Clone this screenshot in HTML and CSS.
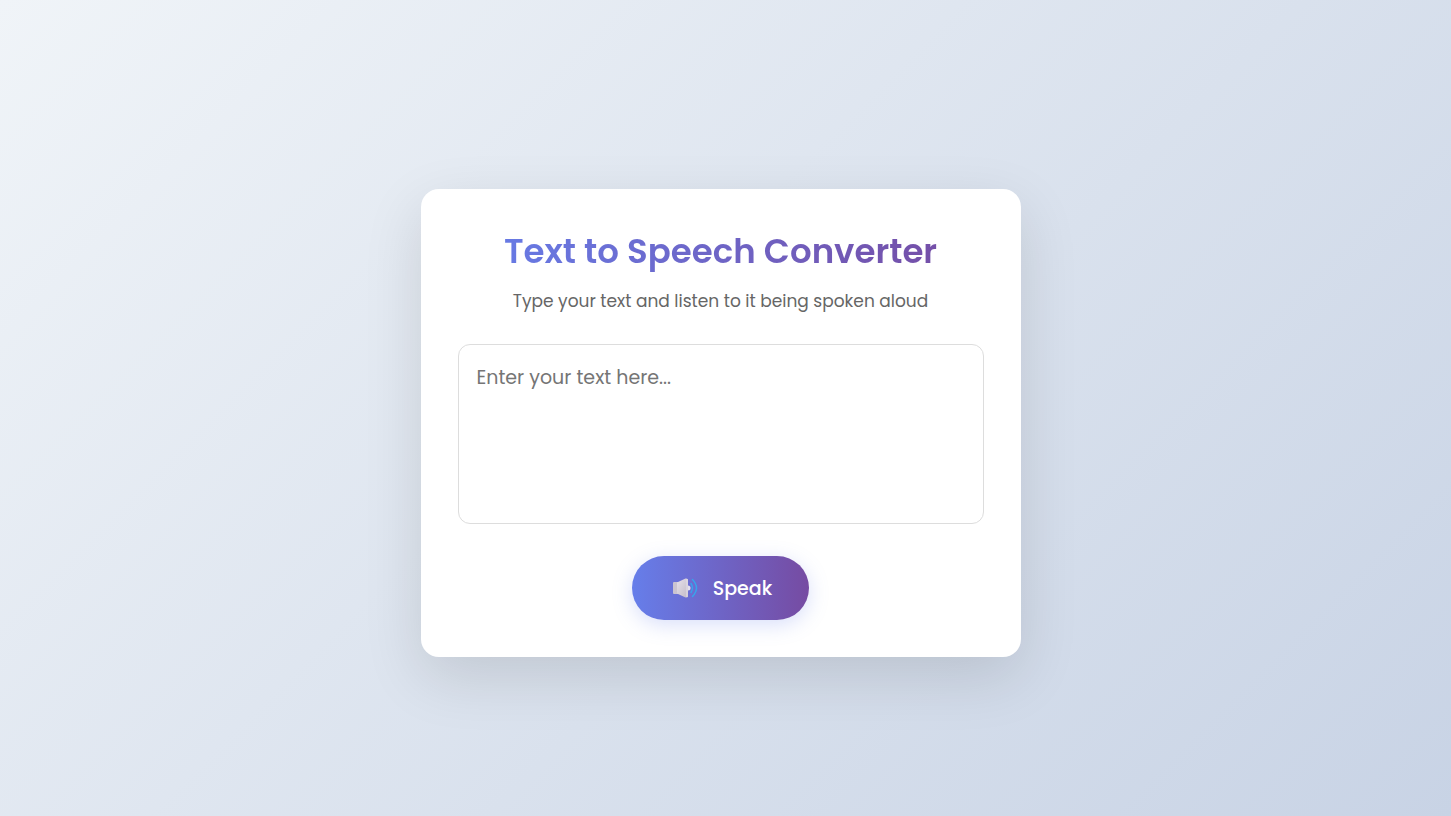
FILE: index.html
```
<!DOCTYPE html>
<html lang="en">
<head>
    <meta charset="UTF-8">
    <meta name="viewport" content="width=device-width, initial-scale=1.0">
    <title>Text to Speech Converter</title>
    <link rel="stylesheet" href="styles.css">
</head>
<body>

    <main class="container">
        <h1>Text to Speech Converter</h1>
        <p class="subtitle">Type your text and listen to it being spoken aloud</p>

        <textarea id="text" aria-label="Text to speak" placeholder="Enter your text here..."></textarea>

        <button id="speak-btn" type="button" onclick="speak()">
            <svg class="speaker" viewBox="0 0 26 22" aria-hidden="true">
                <defs>
                    <linearGradient id="cone" x1="0" y1="0" x2="1" y2="1">
                        <stop offset="0" stop-color="#e6e0e9"/>
                        <stop offset="1" stop-color="#c2bac8"/>
                    </linearGradient>
                </defs>
                <rect x="1" y="5" width="7" height="12" rx="1" fill="#cbc4d0"/>
                <path d="M5 5.500L13.500 1.500Q16 1 16 3V19Q16 21 13.500 20.500L5 16.500Z" fill="url(#cone)"/>
                <path d="M16 8.500a2.500 2.500 0 0 1 0 5Z" fill="#e4dfee"/>
                <path d="M15 2V20" stroke="#e2dde6" stroke-width="1.200"/>
                <path d="M19 6.500Q22 11 19 15.500M20.500 2.500Q28.500 11 20.500 19.500" fill="none" stroke="#36a5ec" stroke-width="1.400" stroke-linecap="round"/>
            </svg>
            <span>Speak</span>
        </button>
    </main>

    <script>
        function speak() {
            let text = document.getElementById("text").value.trim();
            if (text) {
                window.speechSynthesis.cancel();
                window.speechSynthesis.speak(new SpeechSynthesisUtterance(text));
            }
        }
    </script>

</body>
</html>
```
FILE: styles.css
```
* {
    box-sizing: border-box;
}
body {
    font-family: Poppins, Inter, sans-serif;
    display: flex;
    justify-content: center;
    align-items: center;
    min-height: 100vh;
    margin: 0;
    padding: 30px 10px 0 0;
    background: linear-gradient(135deg, #f0f4f8, #c8d3e5);
}
.container {
    width: 100%;
    max-width: 600px;
    padding: 36px 37px 37px;
    text-align: center;
    background: white;
    border-radius: 18px;
    box-shadow: 0 20px 60px rgba(0, 0, 0, 0.12);
}
h1 {
    margin: 0 0 12px;
    font-size: 34px;
    font-weight: 600;
    line-height: 52px;
    color: transparent;
    background: linear-gradient(90deg, #667eea, #764ba2);
    background-clip: text;
    -webkit-background-clip: text;
}
.subtitle {
    margin: 0 0 31px;
    font-size: 17px;
    line-height: 24px;
    color: #666;
}
textarea {
    display: block;
    width: 100%;
    height: 180px;
    margin-bottom: 32px;
    padding: 18px;
    font-family: inherit;
    font-size: 19px;
    line-height: 29px;
    border: 1px solid #ddd;
    border-radius: 12px;
    resize: none;
}
textarea::placeholder {
    color: #757575;
}
#speak-btn {
    display: inline-flex;
    align-items: center;
    gap: 15px;
    height: 64px;
    padding: 0 37px 0 40px;
    font-family: inherit;
    font-size: 19px;
    font-weight: 500;
    color: white;
    background: linear-gradient(90deg, #667eea, #764ba2);
    border: none;
    border-radius: 32px;
    box-shadow: 0 5px 20px rgba(102, 126, 234, 0.25);
    cursor: pointer;
    vertical-align: top;
}
.speaker {
    width: 26px;
    height: 22px;
}
```
